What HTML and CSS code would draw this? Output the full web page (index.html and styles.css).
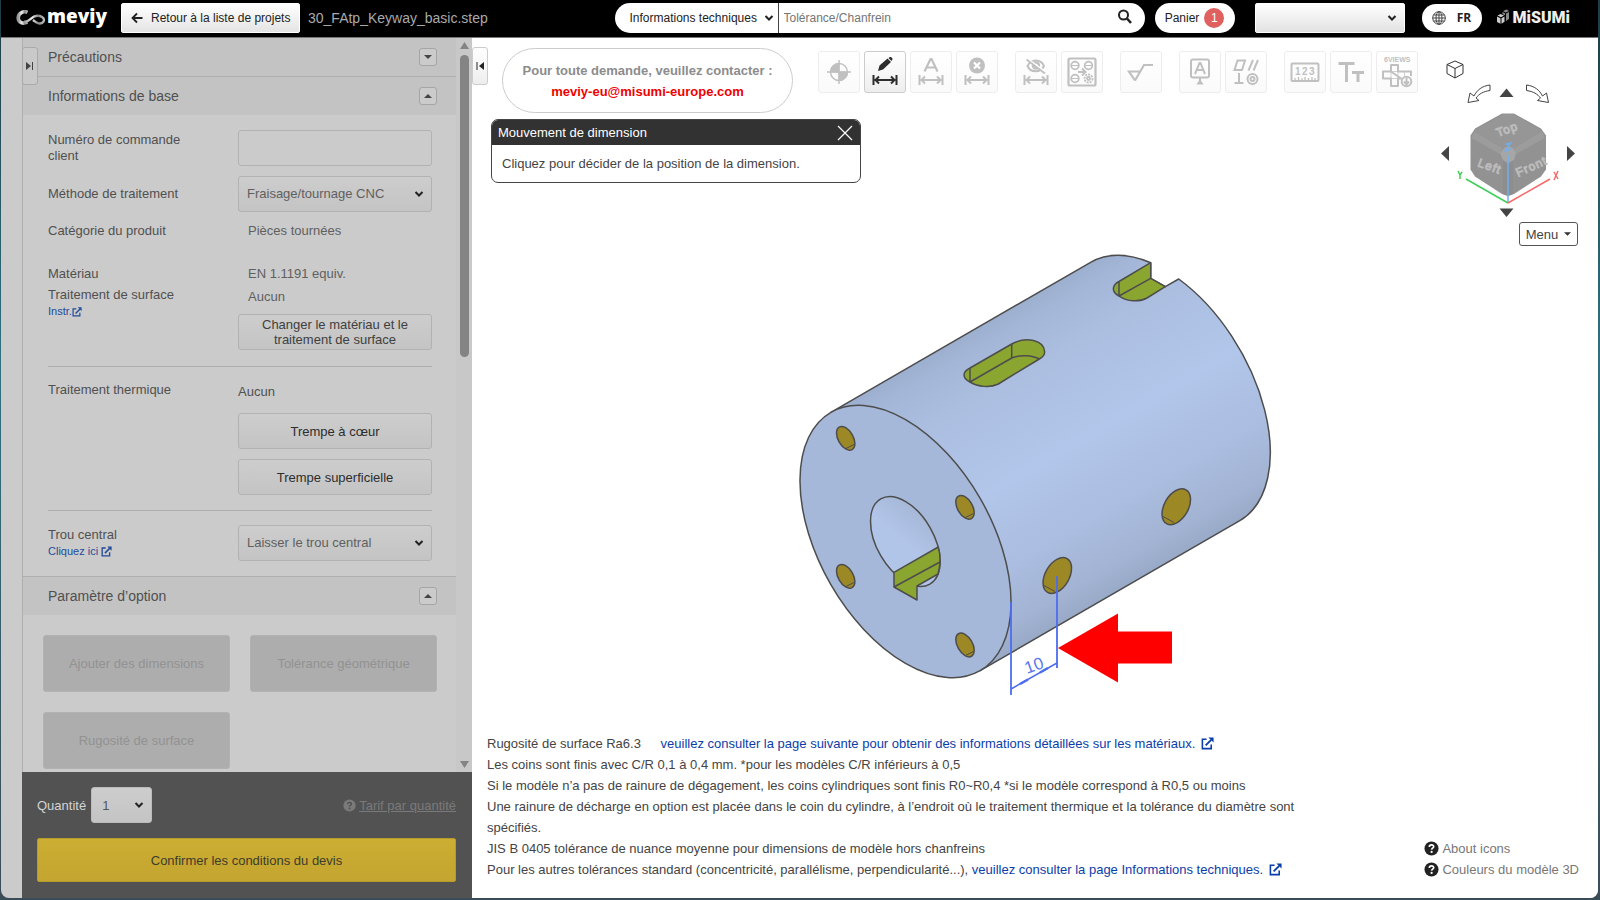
FILE: index.html
```html
<!DOCTYPE html>
<html lang="fr">

<head>
    <meta charset="utf-8">
    <meta name="viewport" content="width=device-width, initial-scale=1.0">
    <title>meviy - 30_FAtp_Keyway_basic.step</title>
    <link rel="stylesheet" href="styles.css">
</head>

<body>
    <!-- shared icons -->
    <svg class="defs" width="0" height="0">
        <symbol id="chevron" viewBox="0 0 10 8">
            <path d="M1.500 2l3.500 3.500L8.500 2" fill="none" stroke="currentColor" stroke-width="2" />
        </symbol>
        <symbol id="external" viewBox="0 0 14 14">
            <path d="M6 2.500H1.500v10h9.500V8" fill="none" stroke="currentColor" stroke-width="1.700" />
            <path d="M5 9l6-6" stroke="currentColor" stroke-width="2" />
            <path d="M8 .5h5.500V6z" fill="currentColor" />
        </symbol>
        <symbol id="help" viewBox="0 0 16 16">
            <circle cx="8" cy="8" r="7.500" fill="currentColor" />
            <path d="M5.700 6.300c.1-3 4.800-2.700 4.600-.2-.1 1.500-2.100 1.500-2.200 3.100" fill="none" stroke="var(--mark)"
                stroke-width="1.800" />
            <circle cx="8.100" cy="11.700" r="1.200" fill="var(--mark)" />
        </symbol>
        <symbol id="dim" viewBox="0 0 42 42">
            <path d="M9.500 24v10M32.500 24v10M11 29h20M15 25.500L11.500 29l3.500 3.500M27 25.500l3.500 3.500-3.500 3.500" fill="none"
                stroke="currentColor" stroke-width="2" />
        </symbol>
    </svg>

    <div class="app">
        <header class="topbar">
            <a class="logo" href="#">
                <svg width="30" height="16" viewBox="0 0 30 16">
                    <defs>
                        <linearGradient id="silver">
                            <stop offset="0" stop-color="#999" />
                            <stop offset=".4" stop-color="#eee" />
                            <stop offset=".7" stop-color="#888" />
                            <stop offset="1" stop-color="#bbb" />
                        </linearGradient>
                    </defs>
                    <g fill="none" stroke="url(#silver)">
                        <path d="M11.500 2.300C7 .5 2.200 3.500 2.200 8c0 4.500 5 6.500 9 4" stroke-width="3.600" />
                        <path d="M8 11.500C13 13 15 6 21 5.700c4-.2 7 2 7 4.300 0 2.500-3 4-6 3.200-2-.5-3.500-2-5-3.200" stroke-width="2.400" />
                    </g>
                </svg>
                <span>meviy</span>
            </a>
            <button class="back" type="button">
                <svg width="12" height="12" viewBox="0 0 12 12">
                    <path d="M11.500 6H1.500M6 1.500L1.500 6 6 10.500" fill="none" stroke="#222" stroke-width="1.800" />
                </svg>
                Retour à la liste de projets
            </button>
            <span class="filename">30_FAtp_Keyway_basic.step</span>

            <form class="search" onsubmit="return false;">
                <span class="select">
                    <select aria-label="Catégorie de recherche">
                        <option>Informations techniques</option>
                    </select>
                    <svg class="chev"><use href="#chevron" /></svg>
                </span>
                <input type="text" aria-label="Recherche" placeholder="Tolérance/Chanfrein">
                <button type="submit" aria-label="Rechercher">
                    <svg width="16" height="16" viewBox="0 0 16 16">
                        <circle cx="6.500" cy="6" r="4.500" fill="none" stroke="#222" stroke-width="2" />
                        <path d="M10 9.500l4 4.500" stroke="#222" stroke-width="2.600" />
                    </svg>
                </button>
            </form>
            <button class="cart" type="button">Panier <span class="count">1</span></button>
            <span class="select account">
                <select aria-label="Compte">
                    <option></option>
                </select>
                <svg class="chev"><use href="#chevron" /></svg>
            </span>
            <button class="lang" type="button">
                <svg width="14" height="14" viewBox="0 0 14 14" fill="none" stroke="#444">
                    <circle cx="7" cy="7" r="6.300" />
                    <ellipse cx="7" cy="7" rx="3" ry="6.300" />
                    <path d="M7 .7v12.600M.7 7h12.600M1.500 4h11M1.500 10h11" />
                </svg>
                FR
            </button>
            <a class="misumi" href="#">
                <svg width="14" height="17" viewBox="0 0 14 17" fill="#ccc">
                    <path d="M1 7.500l3.500 1.800v5.500L1 13zM5.500 9.300L8.500 7.500v5.300l-3 2zM1.500 6.500l3-1.500 3.500 1.500-3 1.700z" />
                    <path d="M7 2l3.500-1.500L13 2 9.500 3.500zM10 4.500L13 3v7l-3 2zM6.500 3l2.500 1.300v2L6.500 5.200z" fill="#888" />
                </svg>
                <span>MiSUMi</span>
            </a>
        </header>

        <div class="main">
            <aside class="sidebar">
                <button class="tab tab-left" type="button" aria-label="Ouvrir">
                    <svg width="8" height="8" viewBox="0 0 8 8">
                        <path d="M0 0l5 4-5 4z" fill="#444" />
                        <path d="M6.500 0v8" stroke="#444" />
                    </svg>
                </button>
                <div class="scrollarea">
                    <div class="panels">
                        <div class="panel-head">
                            <h2>Précautions</h2>
                            <button class="toggle" type="button" aria-label="Déplier">
                                <svg width="8" height="4" viewBox="0 0 8 4"><path d="M0 0h8L4 4z" fill="#444" /></svg>
                            </button>
                        </div>
                        <div class="panel-head bordered">
                            <h2>Informations de base</h2>
                            <button class="toggle" type="button" aria-label="Replier">
                                <svg width="8" height="4" viewBox="0 0 8 4"><path d="M0 4h8L4 0z" fill="#444" /></svg>
                            </button>
                        </div>
                        <div class="panel-body">
                            <div class="row">
                                <label for="order">Numéro de commande client</label>
                                <input class="control" type="text" id="order">
                            </div>
                            <div class="row">
                                <label for="method">Méthode de traitement</label>
                                <span class="select">
                                    <select class="control" id="method">
                                        <option>Fraisage/tournage CNC</option>
                                    </select>
                                    <svg class="chev"><use href="#chevron" /></svg>
                                </span>
                            </div>
                            <div class="row plain">
                                <span>Catégorie du produit</span>
                                <span class="value">Pièces tournées</span>
                            </div>
                            <div class="row plain material">
                                <span>Matériau</span>
                                <span class="value">EN 1.1191 equiv.</span>
                            </div>
                            <div class="row top surface">
                                <div>Traitement de surface<br>
                                    <a class="small" href="#">Instr.<svg width="10" height="10"><use href="#external" /></svg></a>
                                </div>
                                <div>
                                    <p class="value">Aucun</p>
                                    <button class="control" type="button">Changer le matériau et le traitement de surface</button>
                                </div>
                            </div>
                            <hr>
                            <div class="row top heat">
                                <div>Traitement thermique</div>
                                <div>
                                    <p>Aucun</p>
                                    <button class="control dark" type="button">Trempe à cœur</button>
                                    <button class="control dark" type="button">Trempe superficielle</button>
                                </div>
                            </div>
                            <hr>
                            <div class="row">
                                <div>
                                    <label for="hole">Trou central</label><br>
                                    <a class="small" href="#">Cliquez ici <svg width="11" height="11"><use href="#external" /></svg></a>
                                </div>
                                <span class="select">
                                    <select class="control" id="hole">
                                        <option>Laisser le trou central</option>
                                    </select>
                                    <svg class="chev"><use href="#chevron" /></svg>
                                </span>
                            </div>
                        </div>
                        <div class="panel-head bordered">
                            <h2>Paramètre d’option</h2>
                            <button class="toggle" type="button" aria-label="Replier">
                                <svg width="8" height="4" viewBox="0 0 8 4"><path d="M0 4h8L4 0z" fill="#444" /></svg>
                            </button>
                        </div>
                        <div class="options">
                            <button type="button" disabled>Ajouter des dimensions</button>
                            <button type="button" disabled>Tolérance géométrique</button>
                            <button type="button" disabled>Rugosité de surface</button>
                        </div>
                    </div>
                    <div class="scrollbar">
                        <svg width="9" height="7" viewBox="0 0 9 7"><path d="M0 7L4.500 0 9 7z" fill="#848484" /></svg>
                        <div class="thumb"></div>
                        <svg width="9" height="7" viewBox="0 0 9 7"><path d="M0 0h9L4.500 7z" fill="#848484" /></svg>
                    </div>
                </div>
                <div class="order">
                    <div class="quantity">
                        <label for="qty">Quantité</label>
                        <span class="select">
                            <select id="qty">
                                <option>1</option>
                            </select>
                            <svg class="chev"><use href="#chevron" /></svg>
                        </span>
                        <a href="#"><svg width="13" height="13"><use href="#help" /></svg><span>Tarif par quantité</span></a>
                    </div>
                    <button class="confirm" type="button">Confirmer les conditions du devis</button>
                </div>
            </aside>

            <main class="viewer">
                <button class="tab tab-right" type="button" aria-label="Fermer">
                    <svg width="8" height="8" viewBox="0 0 8 8">
                        <path d="M8 0L3 4l5 4z" fill="#222" />
                        <path d="M1 0v8" stroke="#222" />
                    </svg>
                </button>
                <div class="tools">
                    <div class="contact">
                        <span>Pour toute demande, veuillez contacter :</span>
                        <a href="mailto:meviy-eu@misumi-europe.com">meviy-eu@misumi-europe.com</a>
                    </div>
                    <div class="toolbar">
                        <button type="button" aria-label="Origine">
                            <svg viewBox="0 0 42 42" fill="none" stroke="currentColor">
                                <circle cx="21" cy="21" r="8.500" stroke-width="1.500" />
                                <path d="M21 9v24M9 21h24" stroke-width="1.500" />
                                <path d="M21 21v-8.500A8.500 8.500 0 0 0 12.500 21zM21 21v8.500A8.500 8.500 0 0 0 29.500 21z" fill="currentColor" />
                            </svg>
                        </button>
                        <button class="active" type="button" aria-label="Dimension">
                            <svg viewBox="0 0 42 42">
                                <path d="M14 20l1.500-5.500 8-7 3.500 3.500-8 7.500zM24.500 7l1-.8c1.500-1 3.800 1.300 2.700 2.800l-.7 1z" fill="currentColor" />
                                <use href="#dim" />
                            </svg>
                        </button>
                        <button type="button" aria-label="Texte de dimension">
                            <svg viewBox="0 0 42 42">
                                <path d="M14.500 20.500L20.500 8h1l6 12.500M17 16.500h8" fill="none" stroke="currentColor" stroke-width="2.200" />
                                <use href="#dim" />
                            </svg>
                        </button>
                        <button type="button" aria-label="Supprimer la dimension">
                            <svg viewBox="0 0 42 42">
                                <circle cx="21" cy="14.500" r="8" fill="currentColor" />
                                <path d="M18 11.500l6 6M24 11.500l-6 6" stroke="#fff" stroke-width="2.200" />
                                <use href="#dim" />
                            </svg>
                        </button>
                        <button class="group" type="button" aria-label="Masquer">
                            <svg viewBox="0 0 42 42" fill="none" stroke="currentColor">
                                <path d="M12.500 15c3.500-7.500 13.500-7.500 16.500 0-3.500 7-13.500 7-16.500 0z" stroke-width="2" />
                                <circle cx="21" cy="14.500" r="3" stroke-width="2.500" />
                                <path d="M12.500 8l18 13" stroke="#fff" stroke-width="2" />
                                <path d="M11.500 8.500l18.500 14" stroke-width="1.800" />
                                <use href="#dim" />
                            </svg>
                        </button>
                        <button type="button" aria-label="Grouper les trous">
                            <svg viewBox="0 0 42 42" fill="none" stroke="currentColor" stroke-width="1.800">
                                <rect x="7.500" y="7.500" width="27" height="27" rx="1.500" stroke-width="2.200" />
                                <circle cx="14" cy="14.500" r="3.800" />
                                <circle cx="27.500" cy="14.500" r="3.800" />
                                <circle cx="14" cy="27.500" r="3.800" />
                                <circle cx="27.500" cy="27.500" r="4" stroke-dasharray="2 1" />
                                <circle cx="27.500" cy="27.500" r="1.500" />
                                <path d="M11 14.500h6M24.500 14.500h6M11 27.500h6" stroke-width="1" />
                                <path d="M17 21h7M21 17.500l3.500 3.500-3.500 3.500" stroke-width="2" />
                            </svg>
                        </button>
                        <button class="group" type="button" aria-label="Rugosité">
                            <svg viewBox="0 0 42 42" fill="none" stroke="currentColor" stroke-width="2.200">
                                <path d="M15 29.500L9 20.500h11.500M15 29.500L24 14h9" />
                            </svg>
                        </button>
                        <button class="group" type="button" aria-label="Référence">
                            <svg viewBox="0 0 42 42" fill="none" stroke="currentColor" stroke-width="2">
                                <rect x="12" y="8.500" width="18" height="18" rx="2" />
                                <path d="M16 23l4.500-11h1L26 23M18 19h6M21 27v4" />
                                <path d="M21 28l3.500 5.500h-7z" fill="currentColor" stroke="none" />
                            </svg>
                        </button>
                        <button type="button" aria-label="Tolérance géométrique">
                            <svg viewBox="0 0 42 42" fill="none" stroke="currentColor" stroke-width="2">
                                <path d="M12.500 9.500H20L17 19H9.500zM28 9l-4.500 10.500M33 9l-4.500 10.500M14 22v10M9.500 32h9" />
                                <circle cx="27.500" cy="28" r="5" />
                                <circle cx="27.500" cy="28" r="2" />
                            </svg>
                        </button>
                        <button class="group" type="button" aria-label="Mesure">
                            <svg viewBox="0 0 42 42" fill="none" stroke="currentColor" stroke-width="2">
                                <rect x="7.500" y="12.500" width="27" height="17.500" rx="1" />
                                <path d="M11 30v-3M14.500 30v-4M18 30v-3M21 30v-4M24.500 30v-3M28 30v-4M31 30v-3" stroke-width="1.300" />
                                <g font-size="10">
                                    <text x="11" y="24">1</text>
                                    <text x="18" y="24">2</text>
                                    <text x="25" y="24">3</text>
                                </g>
                            </svg>
                        </button>
                        <button type="button" aria-label="Taille du texte">
                            <svg viewBox="0 0 42 42" fill="none" stroke="currentColor" stroke-width="3">
                                <path d="M8.500 12.500h16M16.500 12.500V31M22 21.500h12M28 21.500V31" />
                            </svg>
                        </button>
                        <button type="button" aria-label="6 vues">
                            <svg viewBox="0 0 42 42" fill="none" stroke="currentColor" stroke-width="2">
                                <text x="8" y="11" font-size="7">6VIEWS</text>
                                <path d="M15 20.500V14h7v6.500h13V25M25 27.500h-3V35h-7v-7.500H7v-7h8z" stroke-linejoin="round" />
                                <path d="M15 20.500h7v7h-7zM28.500 20.500v5" stroke-width=".7" />
                                <circle cx="30.500" cy="30.500" r="4.800" fill="#fdfdfd" />
                                <path d="M30.500 27v6M28 30.500l2.500 3 2.500-3" />
                            </svg>
                        </button>
                    </div>
                </div>

                <section class="dialog">
                    <div class="dialog-head">
                        <span>Mouvement de dimension</span>
                        <button type="button" aria-label="Fermer">
                            <svg width="16" height="16" viewBox="0 0 16 16"><path d="M1 1l14 14M15 1L1 15" stroke="#fff" stroke-width="1.200" /></svg>
                        </button>
                    </div>
                    <p>Cliquez pour décider de la position de la dimension.</p>
                </section>

                <div class="viewcube">
                    <svg width="144" height="164" viewBox="1436 56 144 164">
                        <path d="M1455 61l8 3.500v9l-8 4.500-8-4.500v-9zM1447 64.500l8 4 8-4M1455 68.500V78" fill="none" stroke="#333" />
                        <path d="M1490 85c-8 1-13 5-16 11l-4-3-2 9.500 11-2-3-2.500c3-4 7-6.500 14-7.500zM1526.500 85c8 1 13 5 16 11l4-3 2 9.500-11-2 3-2.500c-3-4-7-6.500-14-7.500z"
                            fill="#fff" stroke="#444" />
                        <g fill="#444">
                            <path d="M1499.500 97h14l-7-8.500z" />
                            <path d="M1499.500 208.500h14l-7 8.500z" />
                            <path d="M1449 146v15l-8-7.500z" />
                            <path d="M1567 146v15l8-7.500z" />
                        </g>
                        <path d="M1502 113.500h12l27 15 5 7v34l-5 7-27 17.500-6 2-6-2-27-17.500-4.500-7v-34l4.500-7z" fill="#929292" />
                        <path d="M1504 114h9l29 17-28 17-6-3-6 3-28-17z" fill="#969696" />
                        <path d="M1474 131.500l28 16.500-2 6-28.500-16zM1542 131.500l-28 16.500 2 6 29-16z" fill="#9c9c9c" />
                        <path d="M1503 161l5 4 5-4v33l-5 2-5-2z" fill="#8d8d8d" />
                        <path d="M1504 148l4-2 5 2 3 5-2 7-6 3-5-3-3-7z" fill="#a6a6a6" />
                        <g class="facename">
                            <text x="1498" y="137" transform="rotate(-20 1498 137)">Top</text>
                            <text x="1477" y="166" transform="rotate(20 1477 166)">Left</text>
                            <text x="1518" y="177" transform="rotate(-24 1518 177)">Front</text>
                        </g>
                        <g fill="none" stroke-width="1.500">
                            <path d="M1508 155v48M1505.500 144.500l5-1.500-5 8 5-2" stroke="#6fb0f0" />
                            <path d="M1508 203l-42-24M1458 171l2 4 2-3M1460 175v4" stroke="#3fce5a" />
                            <path d="M1508 203l42-24M1554 172l4 7M1558 171l-4 9" stroke="#f76b6b" />
                        </g>
                    </svg>
                    <button type="button">Menu
                        <svg width="7" height="4" viewBox="0 0 8 4"><path d="M0 0h8L4 4z" fill="#333" /></svg>
                    </button>
                </div>

                <div class="stage">
                    <svg viewBox="472 115 1126 618">
                        <defs>
                            <linearGradient id="body" gradientUnits="userSpaceOnUse" x1="830.900" y1="412.300" x2="980.100" y2="670.700">
                                <stop offset="0" stop-color="#9dafcf" />
                                <stop offset=".06" stop-color="#a4b6d7" />
                                <stop offset=".2" stop-color="#abbee0" />
                                <stop offset=".5" stop-color="#b1c6ea" />
                                <stop offset=".75" stop-color="#abbde0" />
                                <stop offset=".92" stop-color="#a2b3d3" />
                                <stop offset="1" stop-color="#99aac8" />
                            </linearGradient>
                            <linearGradient id="bore" x1="0" y1="0" x2=".6" y2="1">
                                <stop offset="0" stop-color="#a3b3d1" />
                                <stop offset=".6" stop-color="#b1c5e9" />
                            </linearGradient>
                        </defs>
                        <g stroke="#4d4d4d" stroke-width="1.500" stroke-linejoin="round">
                            <!-- outer body -->
                            <path fill="url(#body)"
                                d="M830.900 412.300L1090.600 262.300A149.200 86.200 60 0 1 1150.700 262.700V278.300L1165.300 286.700 1178.700 279A149.200 86.200 60 0 1 1239.800 520.700L980.100 670.700z" />
                            <!-- open keyway at the back -->
                            <path fill="#8ba630"
                                d="M1150.700 262.700L1119 281.500C1112 285 1111 292 1119 296C1127 302 1140 302 1147 298L1165.300 286.700 1150.700 278.300z" />
                            <path fill="none" d="M1119 281.500V296L1150.700 278.300" />
                            <!-- closed slot -->
                            <path fill="#8ba630"
                                d="M970 368L1011.700 344C1026 336 1044 340 1044.700 351.700C1044.700 355 1043 357 1039.300 359L998.300 384C990 388 978 387 970 382C962 378 962 372 970 368z" />
                            <path fill="none" d="M970 368V382L1011.700 358C1020 354.500 1032 355 1039.300 359M1011.700 344V358" />
                            <!-- front face and bore -->
                            <ellipse cx="905.500" cy="541.500" rx="149.200" ry="86.200" transform="rotate(60 905.500 541.500)" fill="#a6b8d9" />
                            <ellipse cx="905.300" cy="541.500" rx="49.200" ry="28.400" transform="rotate(60 905.300 541.500)" fill="url(#bore)" />
                            <path fill="#8ba630" d="M894 572.300L938.300 547Q940.500 554 940 562 939.500 569 938 574L917 586V600L894 587z" />
                            <path fill="none" d="M894 587L940 562" />
                            <!-- threaded holes -->
                            <g fill="#9c8825">
                                <ellipse cx="845.700" cy="438.300" rx="13" ry="7.500" transform="rotate(60 845.700 438.300)" />
                                <ellipse cx="965" cy="507.300" rx="13" ry="7.500" transform="rotate(60 965 507.300)" />
                                <ellipse cx="845.700" cy="576.300" rx="13" ry="7.500" transform="rotate(60 845.700 576.300)" />
                                <ellipse cx="965" cy="645" rx="13" ry="7.500" transform="rotate(60 965 645)" />
                                <ellipse cx="1057.300" cy="575.500" rx="19.500" ry="12" transform="rotate(-60 1057.300 575.500)" />
                                <ellipse cx="1176.300" cy="506.700" rx="19.500" ry="12" transform="rotate(-60 1176.300 506.700)" />
                            </g>
                            <path fill="none" stroke-width="1"
                                d="M846 448.500l8-4M965.500 517.500l8-4M846 586.500l8-4M965.500 655.500l8-4M1044 585.500l11 6M1163 516.500l11 6" />
                        </g>
                        <!-- dimension being placed -->
                        <g stroke="#4d6df0" fill="none">
                            <path d="M1011 602v93M1057 576v92" stroke-width="1.800" />
                            <path d="M1011 689l46-26" stroke-width="1.500" />
                            <path d="M1020 684l8-4.500M1040 672.500l8-4.500" stroke-width="2.500" />
                        </g>
                        <text class="dimtext" x="1027" y="674" transform="rotate(-20 1027 674)">10</text>
                        <path d="M1058 648L1118 613.500v18h54v32h-54v19z" fill="#f00" />
                    </svg>
                </div>

                <div class="notes">
                    <div class="notes-text">
                        <p>Rugosité de surface Ra6.3 <a class="after" href="#">veuillez consulter la page suivante pour obtenir des informations détaillées sur les matériaux. <svg width="13" height="13"><use href="#external" /></svg></a></p>
                        <p>Les coins sont finis avec C/R 0,1 à 0,4 mm. *pour les modèles C/R inférieurs à 0,5</p>
                        <p>Si le modèle n’a pas de rainure de dégagement, les coins cylindriques sont finis R0~R0,4 *si le modèle correspond à R0,5 ou moins</p>
                        <p>Une rainure de décharge en option est placée dans le coin du cylindre, à l’endroit où le traitement thermique et la tolérance du diamètre sont spécifiés.</p>
                        <p>JIS B 0405 tolérance de nuance moyenne pour dimensions de modèle hors chanfreins</p>
                        <p>Pour les autres tolérances standard (concentricité, parallélisme, perpendicularité...), <a href="#">veuillez consulter la page Informations techniques. <svg width="13" height="13"><use href="#external" /></svg></a></p>
                    </div>
                    <div class="help">
                        <a href="#"><svg width="15" height="15"><use href="#help" /></svg>About icons</a>
                        <a href="#"><svg width="15" height="15"><use href="#help" /></svg>Couleurs du modèle 3D</a>
                    </div>
                </div>
            </main>
        </div>
    </div>
</body>

</html>
```
FILE: styles.css
```css
:root {
    --panel: #cbcbcb;
    --panel-head: #c3c3c3;
    --line: #afafaf;
    --link: #0b3ea8;
    --mark: #fff;
}

* {
    box-sizing: border-box;
}

body {
    margin: 0;
    background: linear-gradient(#1d3c46, #2f7180 40%, #3a4c58);
    font-family: "Liberation Sans", Arial, sans-serif;
    font-size: 13px;
    color: #444;
}

button,
input,
select {
    font: inherit;
    color: inherit;
    margin: 0;
}

button {
    padding: 0;
    cursor: pointer;
}

p,
h2 {
    margin: 0;
}

a {
    text-decoration: none;
    color: var(--link);
}

.defs {
    position: absolute;
}

.app {
    display: flex;
    flex-direction: column;
    height: 100vh;
    border: solid transparent;
    border-width: 0 2px 2px 1px;
}

/* selects with our own arrow */
.select {
    position: relative;
    display: block;
}

.select select {
    appearance: none;
    width: 100%;
}

.chev {
    position: absolute;
    right: 8px;
    top: calc(50% - 4px);
    width: 10px;
    height: 8px;
    color: #222;
    pointer-events: none;
}

/* top bar */
.topbar {
    display: flex;
    align-items: center;
    height: 38px;
    flex-shrink: 0;
    padding: 0 28px 2px 15px;
    background: #000;
    border-bottom: 1px solid #777;
    font-size: 12px;
}

.topbar > * {
    flex-shrink: 0;
}

.logo {
    display: flex;
    align-items: center;
    width: 105px;
    color: #fff;
    font: 800 19px/30px "Open Sans", sans-serif;
}

.logo span {
    margin: -3px 0 0 1px;
}

.back {
    display: flex;
    align-items: center;
    gap: 8px;
    width: 179px;
    height: 30px;
    padding-left: 9px;
    border: 1px solid #fff;
    border-radius: 2px;
    background: linear-gradient(#fff, #e4e4e4);
    color: #222;
}

.filename {
    margin-left: 8px;
    font-size: 14px;
    color: #aaa;
}

.search {
    display: flex;
    align-items: center;
    width: 530px;
    height: 30px;
    margin-left: auto;
    border-radius: 15px;
    background: #fff;
    overflow: hidden;
}

.search .select {
    width: 164px;
    border-right: 1px solid #444;
}

.search .chev {
    right: 4px;
}

.search select {
    height: 30px;
    padding-left: 15px;
    border: 0;
    background: none;
    color: #222;
}

.search input {
    flex: 1;
    border: 0;
    padding: 0 5px;
    background: none;
}

.search input::placeholder {
    color: #757575;
}

.search button {
    height: 18px;
    margin-right: 12px;
    border: 0;
    background: none;
}

.cart,
.lang {
    display: flex;
    align-items: center;
    justify-content: center;
    height: 30px;
    border: 0;
    border-radius: 15px;
    background: #fff;
    color: #222;
}

.cart {
    gap: 5px;
    width: 80px;
    margin-left: 10px;
}

.count {
    width: 20px;
    line-height: 20px;
    border-radius: 10px;
    background: #e06060;
    color: #fff;
}

.account {
    width: 150px;
    margin: 0 17px 0 20px;
}

.account select {
    display: block;
    height: 30px;
    border: 1px solid #fff;
    border-radius: 2px;
    background: linear-gradient(#fff, #e2e2e2);
}

.lang {
    gap: 11px;
    width: 60px;
    height: 28px;
    font: bold 12px "Open Sans", sans-serif;
}

.misumi {
    display: flex;
    align-items: center;
    gap: 3px;
    margin-left: 14px;
    color: #eee;
    font: 900 16px Roboto, sans-serif;
}

/* sidebar */
.main {
    display: flex;
    flex: 1;
    min-height: 0;
    border-radius: 0 0 8px 8px;
    background: var(--panel);
    overflow: hidden;
}

.sidebar {
    position: relative;
    display: flex;
    flex-direction: column;
    flex: 0 0 450px;
    margin-left: 21px;
    color: #505050;
}

.tab {
    position: absolute;
    left: 0;
    top: 9px;
    z-index: 2;
    display: flex;
    align-items: center;
    justify-content: center;
    width: 16px;
    height: 38px;
    border: 1px solid #aaa;
    border-radius: 3px;
    background: linear-gradient(#fff, #eee);
}

.tab-left {
    background: #c9c9c9;
}

.tab-right {
    border-color: #ccc;
}

.scrollarea {
    display: flex;
    flex: 1;
    min-height: 0;
    border-left: 1px solid var(--line);
}

.panels {
    flex: 1;
    overflow: hidden;
}

.panel-head {
    display: flex;
    align-items: center;
    justify-content: space-between;
    height: 38px;
    padding: 0 19px 0 25px;
    background: var(--panel-head);
}

.panel-head.bordered {
    height: 39px;
    border-top: 1px solid var(--line);
}

.panel-head h2 {
    font-size: 14px;
    font-weight: normal;
}

.toggle {
    display: flex;
    align-items: center;
    justify-content: center;
    width: 18px;
    height: 18px;
    border: 1px solid #a5a5a5;
    border-radius: 3px;
    background: #cbcbcb;
}

.panel-body {
    padding: 15px 24px 15px 25px;
    line-height: 16px;
}

.row {
    display: grid;
    grid-template-columns: 190px 1fr;
    align-items: center;
    margin-bottom: 10px;
}

.row:last-child {
    margin-bottom: 0;
}

.row label {
    max-width: 150px;
}

.row.plain {
    height: 18px;
}

.row.material {
    margin: 25px 0 3px;
}

.row.top {
    align-items: start;
}

.row.surface {
    margin-bottom: 16px;
}

.row.heat {
    margin-bottom: 15px;
}

.row p {
    line-height: 22px;
}

.row.top > :first-child {
    padding-top: 1px;
}

.value {
    padding-left: 10px;
    color: #606060;
}

.control {
    display: block;
    width: 100%;
    height: 36px;
    padding: 0 8px;
    border: 1px solid #b2b2b2;
    border-radius: 3px;
    background: linear-gradient(#cdcdcd, #c4c4c4);
}

button.control {
    padding: 0 20px;
    line-height: 15px;
    color: #404040;
}

.surface .control {
    margin-top: 6px;
}

.heat .control {
    margin-top: 10px;
}

button.dark {
    color: #2d2d2d;
}

input.control {
    background: var(--panel);
}

select.control {
    color: #606060;
}

.small {
    font-size: 11px;
    color: #234c9a;
}

.small svg {
    vertical-align: -2px;
}

hr {
    margin: 0 0 14px;
    border: 0;
    border-top: 1px solid var(--line);
}

.options {
    display: grid;
    grid-template-columns: 1fr 1fr;
    gap: 20px;
    padding: 20px 19px 20px 20px;
}

.options button {
    height: 57px;
    border: 1px solid #b2b2b2;
    border-radius: 3px;
    background: #adadad;
    color: #929292;
}

.scrollbar {
    display: flex;
    flex-direction: column;
    align-items: center;
    width: 16px;
    padding: 4px 0;
    background: #c8c8c8;
}

.scrollbar svg:last-child {
    margin-top: auto;
}

/* runs down to about the first rule of the form */
.thumb {
    width: 9px;
    height: 302px;
    margin-top: 6px;
    border-radius: 5px;
    background: #848484;
}

.order {
    padding: 15px 16px 16px 15px;
    background: #525252;
}

.quantity {
    display: flex;
    align-items: center;
    margin-bottom: 15px;
    color: #d4d4d4;
}

.quantity .select {
    width: 61px;
    margin-left: 5px;
}

.quantity select {
    display: block;
    height: 36px;
    padding-left: 10px;
    border: 1px solid #bbb;
    border-radius: 3px;
    background: linear-gradient(#cdcdcd, #c4c4c4);
    color: #555;
}

.quantity a {
    --mark: #525252;
    display: flex;
    align-items: center;
    gap: 3px;
    margin-left: auto;
    color: #7a7a7a;
}

.quantity a span {
    text-decoration: underline;
}

.confirm {
    display: block;
    width: 100%;
    height: 44px;
    border: 1px solid #b59b2c;
    border-radius: 2px;
    background: linear-gradient(#ccae33, #c3a530);
    color: #3c3c2c;
}

/* viewer */
.viewer {
    position: relative;
    display: flex;
    flex-direction: column;
    flex: 1;
    min-width: 0;
    background: #fff;
}

.tools {
    display: flex;
    height: 77px;
    padding: 10px 0 2px 30px;
}

.contact {
    display: flex;
    flex-direction: column;
    align-items: center;
    justify-content: center;
    flex: 0 0 291px;
    border: 1px solid #ccc;
    border-radius: 33px;
    line-height: 21px;
    font-weight: bold;
    color: #8c8c8c;
}

.contact a {
    color: #f00000;
}

.toolbar {
    display: flex;
    gap: 4px;
    margin: 3px 0 0 25px;
}

.toolbar button {
    width: 42px;
    height: 42px;
    border: 1px solid #ededed;
    border-radius: 3px;
    background: linear-gradient(#fff, #fafafa);
    color: #c0c0c0;
}

.toolbar button.group {
    margin-left: 13px;
}

.toolbar button.active {
    border-color: #ccc;
    background: linear-gradient(#fff, #eee);
    color: #2d2d2d;
}

.toolbar svg {
    display: block;
    width: 42px;
    height: 42px;
    margin: -1px;
}

.toolbar text {
    fill: currentColor;
    stroke: none;
    font-family: "Liberation Sans", sans-serif;
    font-weight: bold;
}

.dialog {
    position: absolute;
    left: 19px;
    top: 81px;
    z-index: 1;
    width: 370px;
    border: 1px solid #444;
    border-radius: 7px;
    background: #fff;
    overflow: hidden;
}

.dialog-head {
    display: flex;
    align-items: center;
    justify-content: space-between;
    height: 25px;
    padding: 0 7px 0 6px;
    background: #323232;
    color: #fff;
}

.dialog-head button {
    height: 16px;
    border: 0;
    background: none;
}

.dialog p {
    padding: 0 10px;
    line-height: 37px;
}

.viewcube {
    position: absolute;
    right: 18px;
    top: 18px;
    z-index: 1;
    display: flex;
    flex-direction: column;
    align-items: flex-end;
}

.viewcube button {
    display: flex;
    align-items: center;
    justify-content: center;
    gap: 6px;
    width: 59px;
    height: 24px;
    margin: 2px 2px 0 0;
    border: 1px solid #555;
    border-radius: 3px;
    background: #fff;
}

.facename {
    font-size: 12px;
    letter-spacing: 1px;
    fill: #929292;
    stroke: #bcbcbc;
    stroke-width: 1;
}

.stage {
    flex: 1;
    min-height: 0;
}

.stage svg {
    display: block;
    width: 100%;
    height: 100%;
}

.dimtext {
    font-size: 17px;
    fill: #5a78ee;
}

.notes {
    display: flex;
    align-items: flex-end;
    justify-content: space-between;
    padding: 0 19px 18px 15px;
    line-height: 21px;
}

.notes-text {
    max-width: 830px;
}

.notes-text svg {
    margin-left: 2px;
    vertical-align: -2px;
}

.after {
    margin-left: 16px;
}

.help a {
    display: flex;
    align-items: center;
    gap: 3px;
    color: #777;
}

.help svg {
    color: #222;
}
```
